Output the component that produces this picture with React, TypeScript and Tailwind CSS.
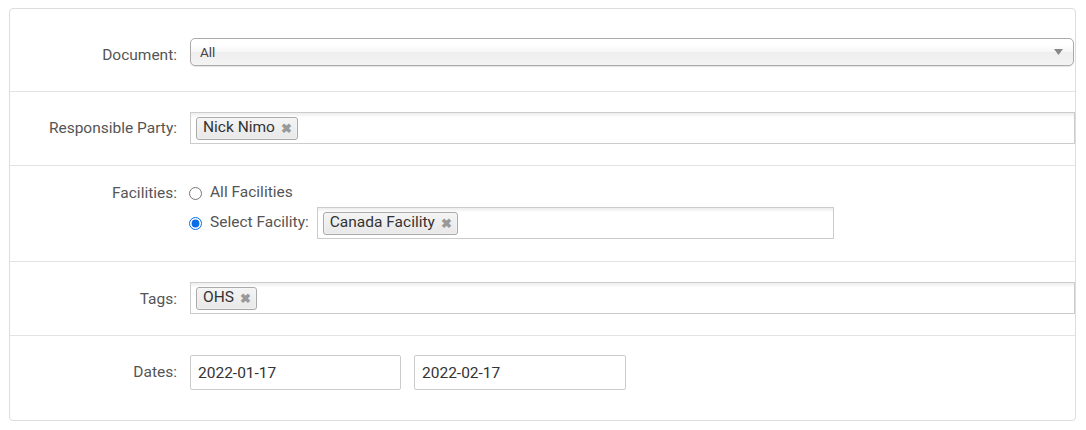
import React from 'react';

const Tag = ({ label }: { label: string }) => (
  <span className="inline-flex items-center h-[23px] pl-[6px] pr-[5px] rounded-[3px] border border-[#aaa] bg-gradient-to-b from-[#f4f4f4] to-[#e8e8e8] text-[15.5px] text-[#333] leading-none shadow-[inset_0_0_2px_#fff]">
    {label}
    <span className="ml-[6px] text-[13px] font-bold text-[#999]">✖</span>
  </span>
);

const MultiBox = ({ tags, className = '' }: { tags: string[]; className?: string }) => (
  <div className={`h-[32px] border border-[#ccc] bg-gradient-to-b from-[#eee] from-[1%] to-white to-[15%] flex items-center px-[5px] gap-1 ${className}`}>
    {tags.map(t => (
      <Tag key={t} label={t} />
    ))}
  </div>
);

const Label = ({ children, className = '' }: { children: React.ReactNode; className?: string }) => (
  <div className={`w-[167px] shrink-0 text-right text-[15.5px] text-[#555] ${className}`}>{children}</div>
);

export default function App() {
  return (
    <div className="bg-white w-[1086px] h-[430px] pt-[8px] pl-[9px]" style={{ fontFamily: 'Roboto, "Liberation Sans", sans-serif' }}>
      <div className="w-[1067px] border border-[#ddd] rounded-[4px] bg-white">
        {/* Document */}
        <div className="h-[83px] flex items-start gap-[13px] pt-[29px] border-b border-[#e3e3e3]">
          <Label className="h-[28px] leading-[28px] pt-[3px]">Document:</Label>
          <div className="flex-1 mr-[1px] h-[28px] rounded-[5px] border border-[#aaa] bg-[linear-gradient(#fff_20%,#f6f6f6_50%,#eee_52%,#f4f4f4_100%)] shadow-[0_1px_1px_rgba(0,0,0,0.1)] flex items-center justify-between pl-[9px] pr-[10px]">
            <span className="text-[13.5px] text-[#444]">All</span>
            <svg width="9" height="6" viewBox="0 0 9 6">
              <path d="M0 0 L9 0 L4.5 6 Z" fill="#888" />
            </svg>
          </div>
        </div>

        {/* Responsible Party */}
        <div className="h-[74px] flex items-start gap-[13px] pt-[20px] border-b border-[#e3e3e3]">
          <Label className="h-[32px] leading-[32px]">Responsible Party:</Label>
          <MultiBox tags={['Nick Nimo']} className="flex-1" />
        </div>

        {/* Facilities */}
        <div className="h-[96px] flex items-start gap-[12px] pt-[17px] border-b border-[#e3e3e3]">
          <Label className="h-[20px] leading-[20px]">Facilities:</Label>
          <div className="flex flex-col gap-[4px]">
            <label className="flex items-center h-[20px] text-[15.5px] text-[#555]">
              <input type="radio" name="fac" className="w-[13px] h-[13px] m-0 mr-[8px] accent-[#0b6ce8]" />
              All Facilities
            </label>
            <div className="flex items-center">
              <label className="flex items-center text-[15.5px] text-[#555]">
                <input type="radio" name="fac" defaultChecked className="w-[13px] h-[13px] m-0 mr-[8px] accent-[#0b6ce8]" />
                Select Facility:
              </label>
              <MultiBox tags={['Canada Facility']} className="ml-[8px] w-[517px]" />
            </div>
          </div>
        </div>

        {/* Tags */}
        <div className="h-[74px] flex items-start gap-[13px] pt-[20px] border-b border-[#e3e3e3]">
          <Label className="h-[32px] leading-[32px] pt-[1px]">Tags:</Label>
          <MultiBox tags={['OHS']} className="flex-1" />
        </div>

        {/* Dates */}
        <div className="h-[84px] flex items-start gap-[13px] pt-[19px]">
          <Label className="h-[35px] leading-[35px]">Dates:</Label>
          <div className="flex gap-[13px]">
            <input
              defaultValue="2022-01-17"
              className="w-[211px] h-[35px] border border-[#ccc] rounded-[2px] px-[7px] text-[15.5px] text-[#333] outline-none"
            />
            <input
              defaultValue="2022-02-17"
              className="w-[212px] h-[35px] border border-[#ccc] rounded-[2px] px-[7px] text-[15.5px] text-[#333] outline-none"
            />
          </div>
        </div>
      </div>
    </div>
  );
}
